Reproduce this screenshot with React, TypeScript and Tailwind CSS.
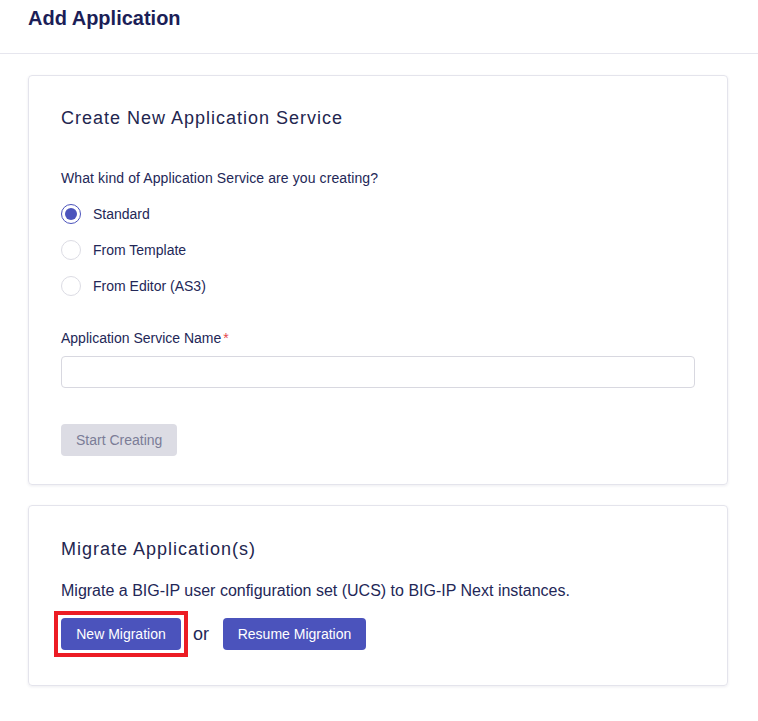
export default function App() {
  const options = ["Standard", "From Template", "From Editor (AS3)"];
  const selected = 0;

  return (
    <div className="min-h-screen bg-white text-[#232757] font-[Liberation_Sans,Arial,sans-serif]">
      {/* Header */}
      <div className="h-[54px] border-b border-[#e6e6ee] px-[28px] pt-[6px]">
        <h1 className="text-[20px] font-bold leading-[24px] text-[#1b1e57]">Add Application</h1>
      </div>

      <div className="px-[28px] pt-[21px] pr-[30px] flex flex-col gap-[20px]">
        {/* Create card */}
        <div className="rounded-[4px] border border-[#e4e4ec] shadow-[0_1px_3px_rgba(30,30,80,0.08)] px-[32px] pt-[31px] pb-[28px]">
          <h2 className="text-[18px] leading-[22px] tracking-[1px] text-[#23264f]">
            Create New Application Service
          </h2>

          <p className="mt-[41px] text-[14px] leading-[16px] tracking-[0.1px]">
            What kind of Application Service are you creating?
          </p>

          <div className="mt-[18px] flex flex-col gap-[16px]">
            {options.map((o, i) => (
              <label key={o} className="flex items-center gap-[12px] text-[14px] leading-[20px]">
                {i === selected ? (
                  <span className="w-[20px] h-[20px] rounded-full border-[1.5px] border-[#4b53bc] flex items-center justify-center">
                    <span className="w-[12px] h-[12px] rounded-full bg-[#4b53bc]" />
                  </span>
                ) : (
                  <span className="w-[20px] h-[20px] rounded-full border border-[#dcdce4]" />
                )}
                {o}
              </label>
            ))}
          </div>

          <p className="mt-[34px] text-[14px] leading-[16px]">
            Application Service Name<span className="text-[#e5484d] ml-[2px]">*</span>
          </p>
          <input className="mt-[10px] block w-full h-[32px] rounded-[4px] border border-[#d8d8e0] outline-none" />

          <button className="mt-[36px] h-[32px] px-[15px] rounded-[4px] bg-[#dcdce4] text-[14px] text-[#7b7c97]">
            Start Creating
          </button>
        </div>

        {/* Migrate card */}
        <div className="rounded-[4px] border border-[#e4e4ec] shadow-[0_1px_3px_rgba(30,30,80,0.08)] px-[32px] pt-[32px] pb-[28px]">
          <h2 className="text-[18px] leading-[22px] tracking-[1px] text-[#23264f]">Migrate Application(s)</h2>
          <p className="mt-[22px] text-[16px] leading-[18px]">
            Migrate a BIG-IP user configuration set (UCS) to BIG-IP Next instances.
          </p>
          <div className="mt-[11px] flex items-center">
            <div className="-ml-[7px] border-[4px] border-[#ec1c24] p-[3px]">
              <button className="h-[32px] w-[120px] rounded-[4px] bg-[#4b53bc] text-[14px] text-white">
                New Migration
              </button>
            </div>
            <span className="ml-[5px] mr-[14px] text-[18px] text-[#232757]">or</span>
            <button className="h-[32px] w-[143px] rounded-[4px] bg-[#4b53bc] text-[14px] text-white">
              Resume Migration
            </button>
          </div>
        </div>
      </div>
    </div>
  );
}
